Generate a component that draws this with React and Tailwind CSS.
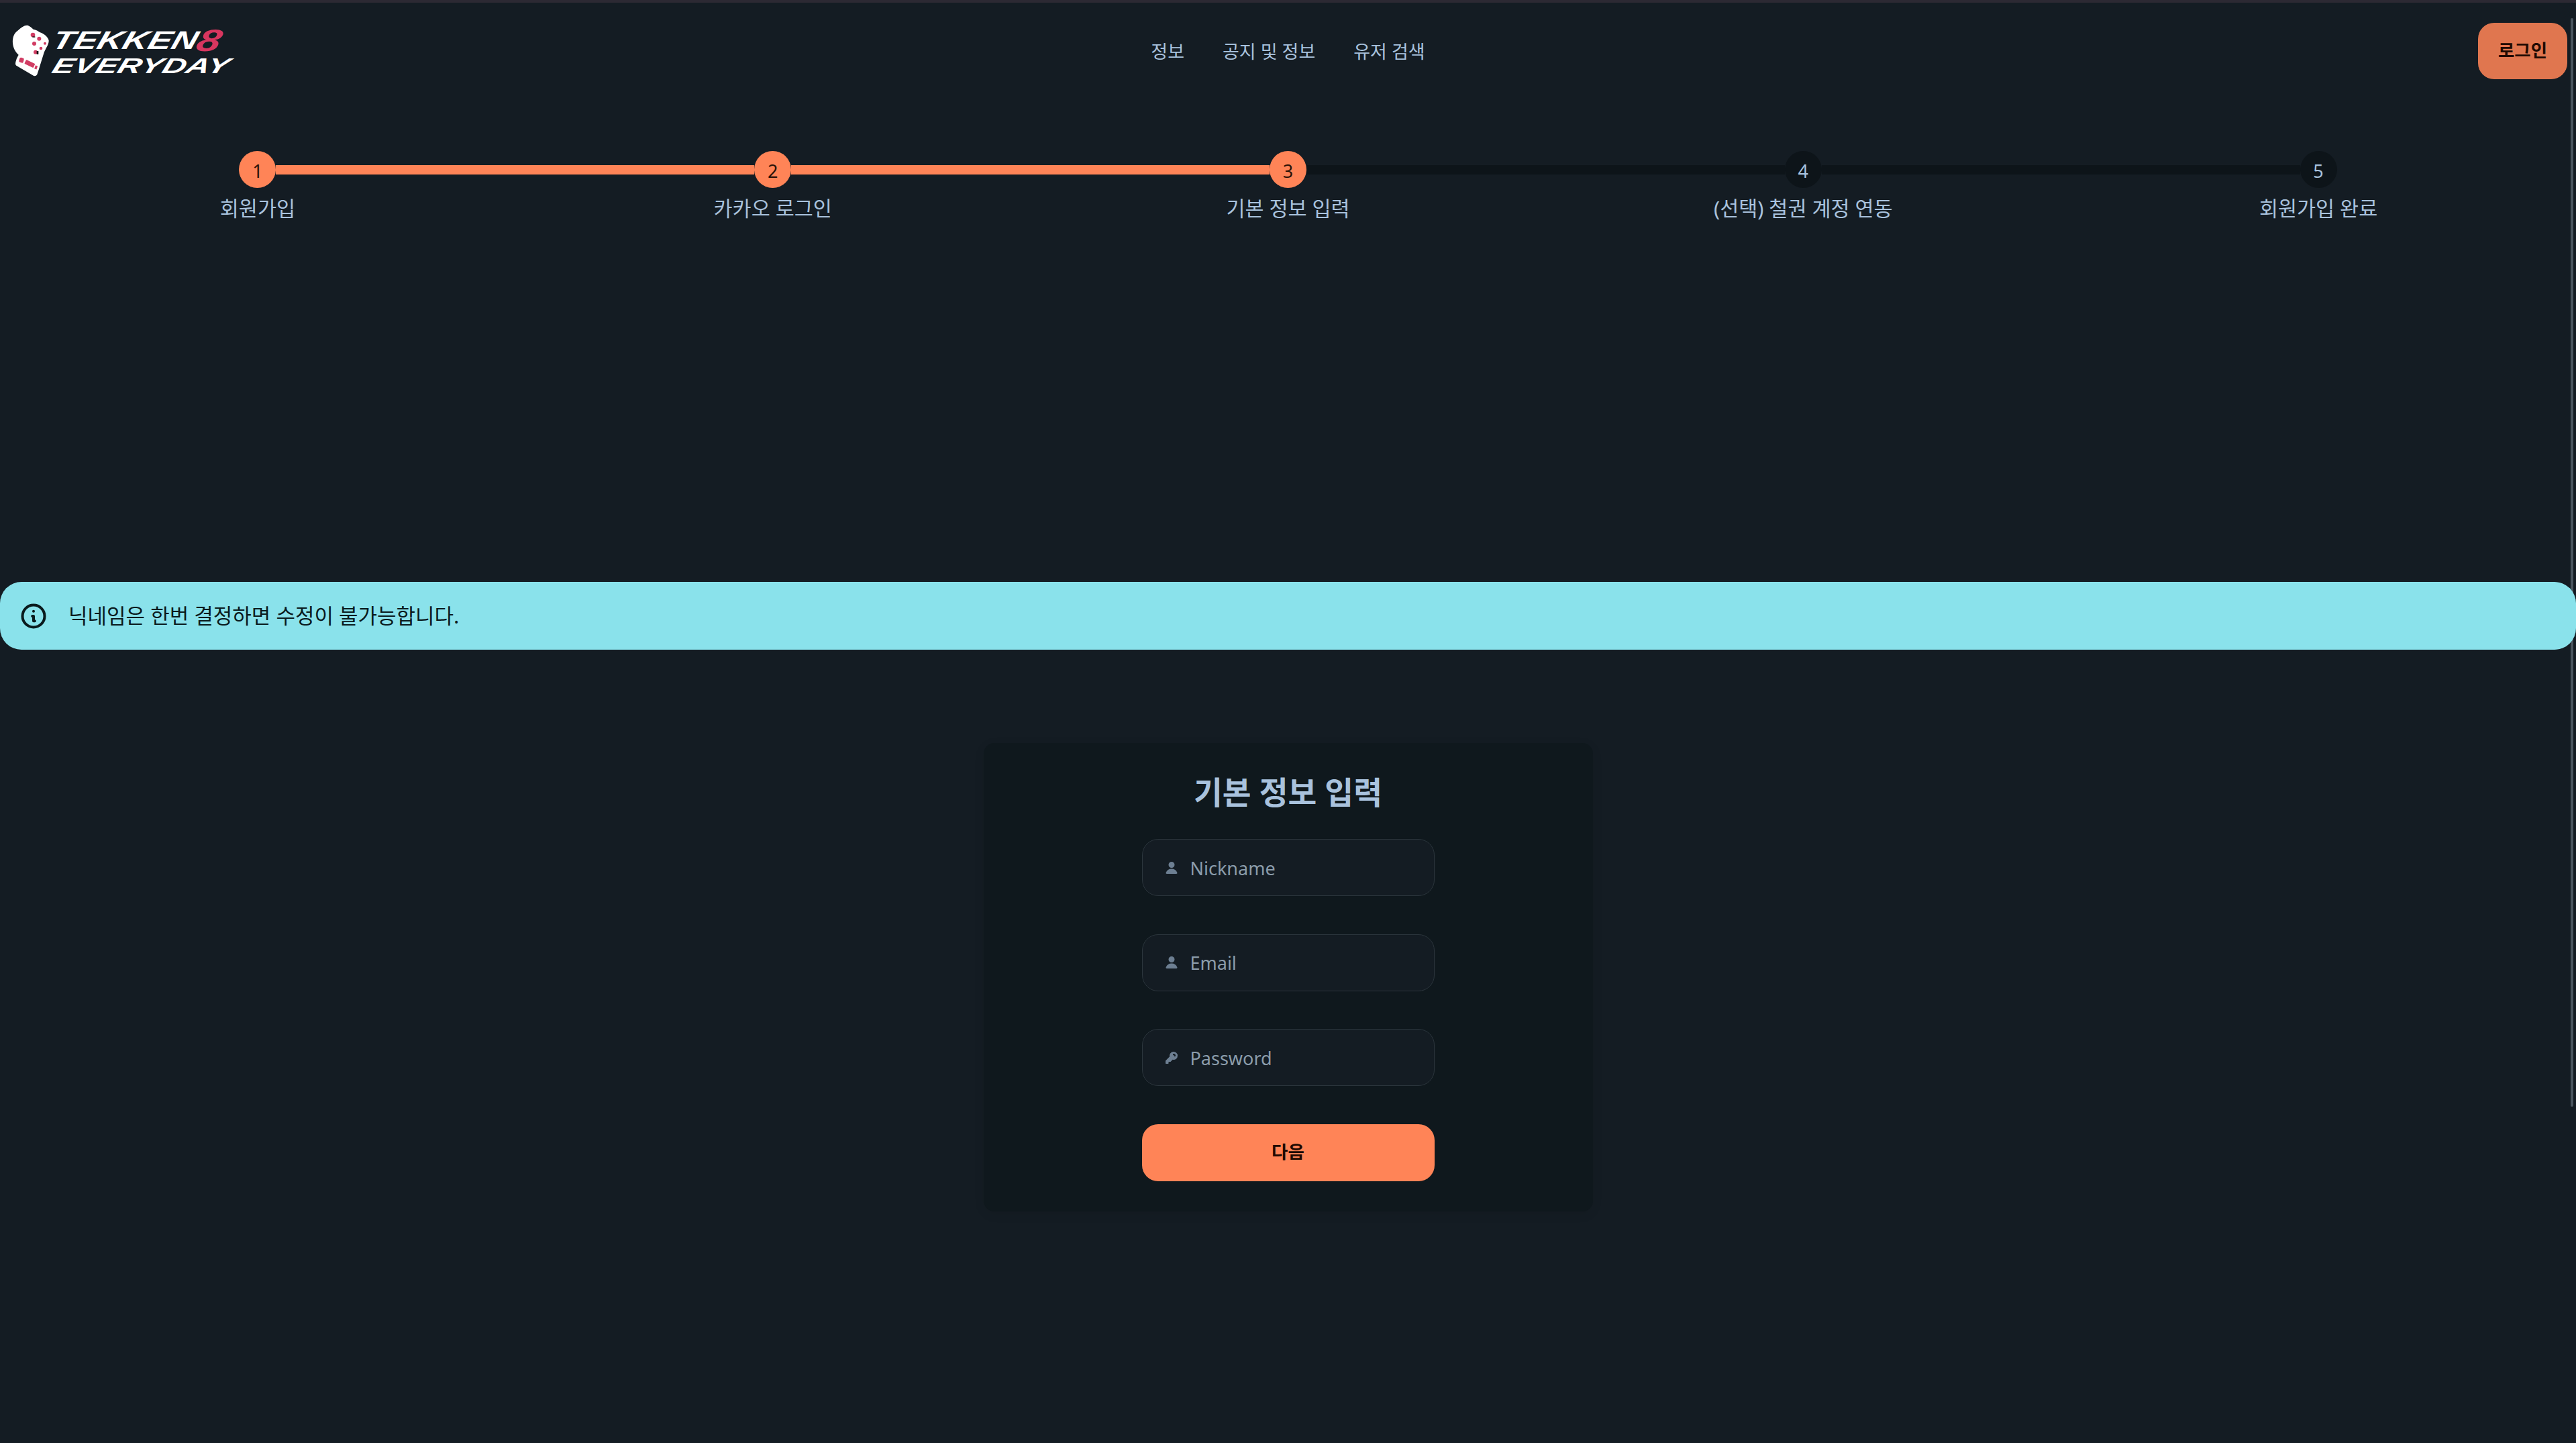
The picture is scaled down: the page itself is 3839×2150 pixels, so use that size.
const steps = [
  { n: 1, label: "회원가입" },
  { n: 2, label: "카카오 로그인" },
  { n: 3, label: "기본 정보 입력" },
  { n: 4, label: "(선택) 철권 계정 연동" },
  { n: 5, label: "회원가입 완료" },
];

const ACTIVE = 3;

function Glove() {
  return (
    <svg width="60" height="80" viewBox="50 55 180 240" className="shrink-0">
      <path
        d="M120 60 C132 62 142 72 148 78 C160 80 170 86 178 92 C196 98 214 112 217 128 C218 145 204 162 196 182 C186 212 176 250 165 280 C160 288 152 288 146 284 L72 240 C66 236 68 226 72 214 C74 204 80 198 82 192 C68 180 58 162 56 140 C54 115 62 95 78 84 C90 74 104 60 120 60 Z"
        fill="#ffffff"
      />
      <circle cx="146" cy="103" r="10" fill="#d13c63" />
      <circle cx="174" cy="120" r="9" fill="#d13c63" />
      <circle cx="152" cy="142" r="9" fill="#d13c63" />
      <circle cx="200" cy="141" r="6" fill="#d13c63" />
      <circle cx="182" cy="163" r="7" fill="#d13c63" />
      <circle cx="158" cy="180" r="9" fill="#d13c63" />
      <rect x="144" y="110" width="12" height="4" fill="#111" />
      <rect x="163" y="175" width="8" height="15" fill="#111" />
      <rect x="85" y="205" width="20" height="22" rx="6" transform="rotate(15 95 216)" fill="#d13c63" />
      <rect x="110" y="222" width="44" height="20" rx="3" transform="rotate(25 132 232)" fill="#d13c63" />
      <rect x="155" y="240" width="10" height="16" transform="rotate(20 160 248)" fill="#d13c63" />
    </svg>
  );
}

function Logo() {
  return (
    <div className="flex items-center pl-[17px] gap-[2px] -mt-[1px]">
      <Glove />
      <div className="flex flex-col w-[290px] font-['Liberation_Sans',sans-serif] font-bold italic text-white">
        <div className="flex items-center h-[44px] origin-left scale-x-[1.38] -skew-x-12">
          <span className="text-[38px] leading-none">TEKKEN</span>
          <span className="text-[46px] leading-none text-[#d8365f]">8</span>
        </div>
        <div className="flex items-center h-[32px] origin-left scale-x-[1.52] -skew-x-12">
          <span className="text-[32px] leading-none">EVERYDAY</span>
        </div>
      </div>
    </div>
  );
}

function Step({ n, label, index }) {
  const reached = n <= ACTIVE;
  const leftLine = index === 0 ? "bg-transparent" : reached ? "bg-[#ff8457]" : "bg-[#0d1419]";
  const nextReached = n + 1 <= ACTIVE;
  const rightLine = index === 4 ? "bg-transparent" : nextReached ? "bg-[#ff8457]" : "bg-[#0d1419]";

  return (
    <div className="flex flex-col items-center">
      <div className="flex items-center w-full">
        <div className={`flex-1 h-[14px] ${leftLine}`} />
        <div
          className={`w-[55px] h-[55px] rounded-full flex items-center justify-center text-[27px] pt-[6px] ${
            reached ? "bg-[#ff8457] text-[#2a1208]" : "bg-[#0d1419] text-[#a9c2dd]"
          }`}
        >
          {n}
        </div>
        <div className={`flex-1 h-[14px] ${rightLine}`} />
      </div>
      <div className="mt-[9px] text-[30.5px] leading-[42px] text-[#a9c2dd]">{label}</div>
    </div>
  );
}

function Field({ placeholder, type = "text", icon }) {
  return (
    <label className="flex items-center gap-[16px] h-[85px] px-[31px] rounded-[24px] border border-[#2b353c] bg-[#141c23]">
      <svg viewBox="0 0 16 16" fill="currentColor" className="w-[24px] h-[24px] shrink-0 text-[#a9c2dd] opacity-60">
        {icon}
      </svg>
      <input
        type={type}
        placeholder={placeholder}
        className="min-w-0 flex-1 pt-[3px] bg-transparent outline-none text-[27px] placeholder:text-[#8b9cab]"
      />
    </label>
  );
}

const userIcon = (
  <path d="M8 8a3 3 0 1 0 0-6 3 3 0 0 0 0 6ZM12.735 14c.618 0 1.093-.561.872-1.139a6.002 6.002 0 0 0-11.215 0c-.22.578.254 1.139.872 1.139h9.47Z" />
);

const keyIcon = (
  <path
    fillRule="evenodd"
    clipRule="evenodd"
    d="M14 6a4 4 0 0 1-4.899 3.899l-1.955 1.955a.5.5 0 0 1-.353.146H5v1.5a.5.5 0 0 1-.5.5h-2a.5.5 0 0 1-.5-.5v-2.293a.5.5 0 0 1 .146-.353l3.955-3.955A4 4 0 1 1 14 6Zm-4-2a.75.75 0 0 0 0 1.5.5.5 0 0 1 .5.5.75.75 0 0 0 1.5 0 2 2 0 0 0-2-2Z"
  />
);

export default function App() {
  return (
    <div className="relative h-[2150px] overflow-hidden bg-[#141c23] font-['Noto_Sans','Noto_Sans_CJK_KR',sans-serif]">
      <div className="h-[4px] bg-[#2c2933]" />

      <header className="grid grid-cols-3 items-center h-[144px]">
        <Logo />
        <nav className="flex justify-center gap-[57px] pt-[2px] text-[27px] text-[#a9c2dd]">
          <a>정보</a>
          <a>공지 및 정보</a>
          <a>유저 검색</a>
        </nav>
        <div className="flex justify-end pr-[13px]">
          <button className="w-[133px] h-[84px] rounded-[24px] bg-[#e0764f] text-[26.5px] font-bold text-[#200a02]">
            로그인
          </button>
        </div>
      </header>

      <div className="grid grid-cols-5 mt-[77px]">
        {steps.map((s, i) => (
          <Step key={s.n} n={s.n} label={s.label} index={i} />
        ))}
      </div>

      <div className="relative z-10 flex items-center gap-[30px] h-[101px] mt-[536px] pl-[28px] rounded-[32px] bg-[#8ae2eb] text-[#0a1a1d]">
        <svg viewBox="0 0 24 24" fill="none" stroke="currentColor" className="w-[44px] h-[44px] shrink-0">
          <path
            strokeLinecap="round"
            strokeLinejoin="round"
            strokeWidth="2.2"
            d="M13 16h-1v-4h-1m1-4h.01M21 12a9 9 0 11-18 0 9 9 0 0118 0z"
          />
        </svg>
        <span className="text-[31px]">닉네임은 한번 결정하면 수정이 불가능합니다.</span>
      </div>

      <div className="flex justify-center mt-[139px]">
        <div className="w-[908px] h-[698px] rounded-[16px] bg-[#0f181d] shadow-[0_4px_16px_rgba(0,0,0,0.08)] flex flex-col items-center pt-[46px]">
          <h1 className="text-[46.5px] leading-[54px] font-bold text-[#a9c2dd]">기본 정보 입력</h1>
          <div className="flex flex-col gap-[56.5px] w-[436px] mt-[43px]">
            <Field placeholder="Nickname" icon={userIcon} />
            <Field placeholder="Email" icon={userIcon} />
            <Field placeholder="Password" type="password" icon={keyIcon} />
            <button className="h-[85px] rounded-[24px] bg-[#ff8457] text-[26.5px] font-bold text-[#200a02]">다음</button>
          </div>
        </div>
      </div>

      <div className="absolute top-[27px] right-[4px] w-[4px] h-[1622px] rounded-full bg-[#4a555e]" />
    </div>
  );
}
